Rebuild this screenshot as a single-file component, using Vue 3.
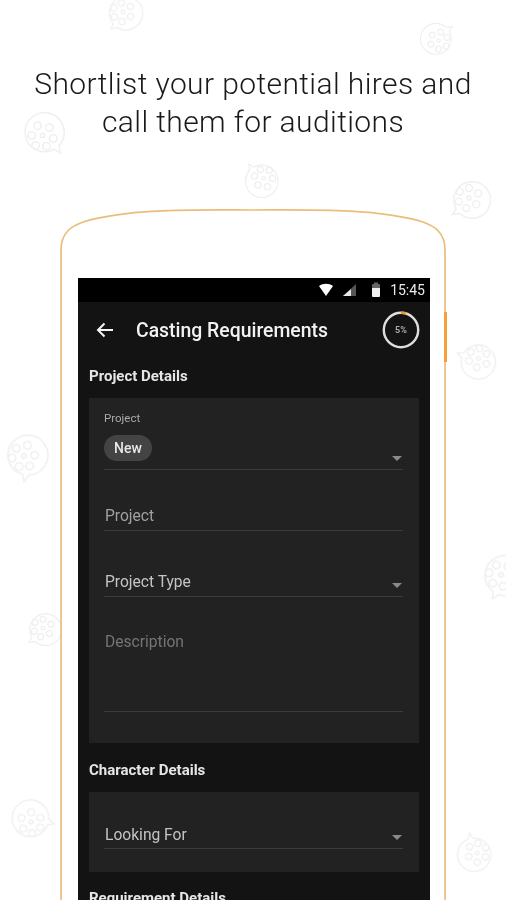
<template>
  <div class="page">
    <!-- Background film reels -->
    <svg
      v-for="reel in reels"
      :key="reel.x + '-' + reel.y"
      class="reel"
      viewBox="0 0 48 48"
      :style="{
        left: reel.x - reel.size / 2 + 'px',
        top: reel.y - reel.size / 2 + 'px',
        width: reel.size + 'px',
        height: reel.size + 'px',
        transform: `rotate(${reel.rotate}deg)`
      }"
    >
      <path class="reel-line" d="M6 42 L10 36 A20 20 0 1 1 14 41 Z" />
      <circle v-for="hole in holes" :key="hole[0] + '-' + hole[1]" class="reel-line" :cx="hole[0]" :cy="hole[1]" r="3.8" />
      <circle class="reel-line" cx="24" cy="24" r="2.2" />
    </svg>

    <!-- Phone outline -->
    <svg class="phone-outline" viewBox="0 0 506 900">
      <path d="M61 900 V250 C61 232 72 226 83 222 C130 208 200 210 253 210 C306 210 376 208 423 222 C434 226 445 232 445 250 V900" />
    </svg>
    <div class="phone-button"></div>

    <h1 class="headline">Shortlist your potential hires and<br />call them for auditions</h1>

    <div class="screen">
      <div class="status-bar">
        <svg class="status-icon wifi" width="16" height="14" viewBox="0 0 16 14"><path d="M1 3 C5 0 11 0 15 3 L8 13 Z" fill="#fff" /></svg>
        <svg class="status-icon signal" width="16" height="14" viewBox="0 0 16 14">
          <path d="M14 1 V13 H1 Z" fill="#555" />
          <path d="M9 6 V13 H1 Z" fill="#e8e8e8" />
        </svg>
        <svg class="status-icon battery" width="12" height="16" viewBox="0 0 12 16">
          <path d="M3 2 H4 V0.5 H8 V2 H9 A1 1 0 0 1 10 3 V6 H2 V3 A1 1 0 0 1 3 2 Z" fill="#666" />
          <path d="M2 6 H10 V14 A1 1 0 0 1 9 15 H3 A1 1 0 0 1 2 14 Z" fill="#f0f0f0" />
        </svg>
        <span class="time">15:45</span>
      </div>

      <div class="toolbar">
        <svg class="back" width="18" height="18" viewBox="0 0 18 18">
          <path d="M17 9 H2 M8.5 2.5 L2 9 L8.5 15.5" fill="none" stroke="#f4f4f4" stroke-width="2" />
        </svg>
        <span class="toolbar-title">Casting Requirements</span>
        <div class="progress">
          <svg width="38" height="38" viewBox="0 0 38 38">
            <circle cx="19" cy="19" r="17.2" fill="none" stroke="#dedede" stroke-width="2.4" />
            <path d="M19 1.8 A17.2 17.2 0 0 1 24.3 2.6" fill="none" stroke="#f29a2e" stroke-width="2.4" />
          </svg>
          <span class="progress-text">5%</span>
        </div>
      </div>

      <div class="section-title first">Project Details</div>
      <div class="card project-card">
        <div class="field select chip-field">
          <span class="mini-label">Project</span>
          <span class="chip">New</span>
          <i class="caret"></i>
        </div>
        <div class="field input-field">
          <span class="field-text muted">Project</span>
        </div>
        <div class="field select type-field">
          <span class="field-text">Project Type</span>
          <i class="caret"></i>
        </div>
        <div class="field description-field">
          <span class="field-text dim">Description</span>
        </div>
      </div>

      <div class="section-title">Character Details</div>
      <div class="card character-card">
        <div class="field select looking-field">
          <span class="field-text">Looking For</span>
          <i class="caret"></i>
        </div>
      </div>

      <div class="section-title last">Requirement Details</div>
    </div>
  </div>
</template>

<script setup>
const reels = [
  { x: 123, y: 12, size: 40, rotate: -10 },
  { x: 438, y: 40, size: 37, rotate: 180 },
  { x: 42, y: 135, size: 47, rotate: -90 },
  { x: 263, y: 178, size: 39, rotate: 90 },
  { x: 469, y: 198, size: 44, rotate: 0 },
  { x: 478, y: 358, size: 41, rotate: 60 },
  { x: 24, y: 456, size: 48, rotate: -45 },
  { x: 501, y: 575, size: 48, rotate: -25 },
  { x: 43, y: 628, size: 38, rotate: 0 },
  { x: 31, y: 822, size: 44, rotate: -130 },
  { x: 477, y: 853, size: 40, rotate: 115 }
]

const holes = [
  [24, 13],
  [34, 19],
  [32, 31],
  [21, 35],
  [13, 28],
  [14, 17]
]
</script>

<style>
html,
body {
  margin: 0;
  background: #fff;
}
</style>

<style scoped>
.page {
  position: relative;
  width: 506px;
  height: 900px;
  overflow: hidden;
  background: #fff;
  font-family: Roboto, "Liberation Sans", sans-serif;
}

.reel {
  position: absolute;
  filter: blur(0.6px);
}

.reel-line {
  fill: none;
  stroke: #efefef;
  stroke-width: 1.5;
}

.phone-outline {
  position: absolute;
  left: 0;
  top: 0;
  width: 506px;
  height: 900px;
  filter: blur(0.3px);
}

.phone-outline path {
  fill: none;
  stroke: #ebbd7c;
  stroke-width: 1.7;
}

.phone-button {
  position: absolute;
  left: 444px;
  top: 312px;
  width: 3px;
  height: 50px;
  background: #f3a138;
}

.headline {
  position: relative;
  margin: 0;
  padding-top: 65px;
  height: 76px;
  font-size: 30px;
  font-weight: 300;
  line-height: 38px;
  color: #1a1a1a;
  text-align: center;
  letter-spacing: 0.4px;
  filter: blur(0.3px);
}

.screen {
  position: relative;
  width: 352px;
  height: 622px;
  margin: 137px 0 0 78px;
  overflow: hidden;
  background: #131313;
  color: #eee;
  filter: blur(0.35px);
}

.status-bar {
  display: flex;
  align-items: center;
  height: 24px;
  padding-right: 5px;
  background: #000;
  justify-content: flex-end;
}

.status-icon {
  margin-right: 7px;
}

.wifi {
  margin-right: 8px;
}

.signal {
  margin-right: 12px;
}

.battery {
  margin-right: 8px;
}

.time {
  font-size: 14px;
  color: #e8e8e8;
}

.toolbar {
  display: flex;
  align-items: center;
  height: 56px;
  padding: 0 10px 0 18px;
}

.back {
  margin-right: 22px;
}

.toolbar-title {
  flex: 1;
  font-size: 19.4px;
  font-weight: 500;
  color: #f2f2f2;
}

.progress {
  position: relative;
  width: 38px;
  height: 38px;
}

.progress-text {
  position: absolute;
  inset: 0;
  display: flex;
  align-items: center;
  justify-content: center;
  font-size: 9px;
  font-weight: 700;
  color: #aaa;
}

.section-title {
  padding: 19px 11px 13px;
  height: 17px;
  line-height: 17px;
  font-size: 15px;
  font-weight: 700;
  color: #e6e6e6;
}

.section-title.first {
  padding-top: 10px;
  padding-bottom: 13px;
}

.section-title.last {
  padding-top: 18px;
}

.card {
  margin: 0 11px;
  padding: 0 16px 0 15px;
  background: #222;
}

.project-card {
  height: 345px;
}

.character-card {
  height: 80px;
}

.field {
  position: relative;
  border-bottom: 1px solid #3c3c3c;
  box-sizing: border-box;
}

.chip-field {
  height: 72px;
  padding-top: 13px;
}

.mini-label {
  display: block;
  height: 14px;
  line-height: 14px;
  font-size: 11.5px;
  color: #aaa;
}

.chip {
  display: inline-block;
  margin-top: 10px;
  width: 48px;
  height: 26px;
  line-height: 26px;
  border-radius: 13px;
  background: #444;
  color: #e8e8e8;
  font-size: 14px;
  font-weight: 500;
  text-align: center;
}

.input-field {
  height: 61px;
  padding-top: 36px;
}

.type-field {
  height: 66px;
  padding-top: 41px;
}

.description-field {
  height: 115px;
  padding-top: 35px;
}

.looking-field {
  height: 57px;
  padding-top: 33px;
}

.field-text {
  display: block;
  height: 20px;
  padding-left: 1px;
  line-height: 20px;
  font-size: 15.6px;
  color: #c4c4c4;
}

.field-text.muted {
  color: #a0a0a0;
}

.field-text.dim {
  color: #757575;
}

.caret {
  position: absolute;
  right: 1px;
  bottom: 8px;
  width: 0;
  height: 0;
  border-left: 5px solid transparent;
  border-right: 5px solid transparent;
  border-top: 5px solid #8a8a8a;
}
</style>
